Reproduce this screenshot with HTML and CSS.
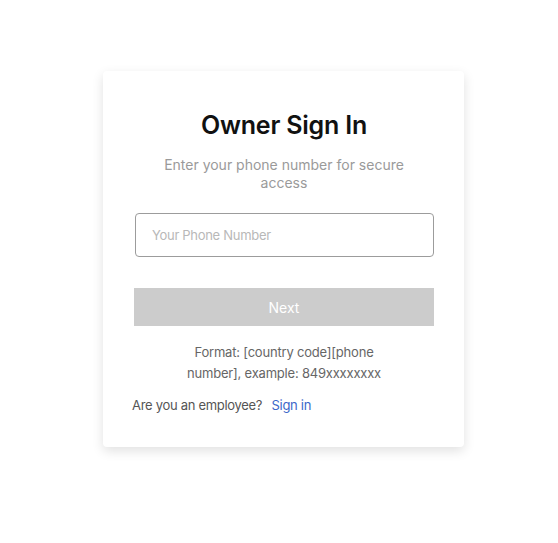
FILE: index.html
```html
<!DOCTYPE html>
<html>
<head>
<meta charset="utf-8">
<link rel="stylesheet" href="styles.css">
</head>
<body>
<div class="page">
  <div class="card">
    <h1 class="title">Owner Sign In</h1>
    <p class="subtitle">Enter your phone number for secure access</p>
    <input class="phone" type="text" placeholder="Your Phone Number">
    <button class="next">Next</button>
    <p class="format">Format: [country code][phone number], example: 849xxxxxxxx</p>
    <p class="employee">Are you an employee? <a class="link" href="#">Sign in</a></p>
  </div>
</div>
</body>
</html>
```
FILE: styles.css
```css
html, body {
  margin: 0;
  padding: 0;
  background: #ffffff;
  font-family: Inter, "Noto Sans", sans-serif;
}
.page {
  padding: 71px 0 60px 103px;
}
.card {
  box-sizing: border-box;
  width: 361px;
  height: 376px;
  padding: 38px 30px 0 31px;
  background: #fff;
  border-radius: 4px;
  box-shadow: 0 4px 12px rgba(0, 0, 0, 0.12);
  display: flex;
  flex-direction: column;
}
.title {
  margin: 0;
  text-align: center;
  font-size: 25px;
  font-weight: 600;
  color: #111;
  line-height: 32px;
  letter-spacing: -0.2px;
}
.subtitle {
  margin: 15px auto 0;
  width: 250px;
  text-align: center;
  font-size: 14px;
  line-height: 18px;
  color: #9a9a9a;
}
.phone {
  box-sizing: border-box;
  margin: 21px 0 0 1px;
  width: 299px;
  height: 44px;
  border: 1px solid #9c9c9c;
  border-radius: 4px;
  padding: 0 16px;
  font-family: inherit;
  font-size: 13px;
  color: #333;
  outline: none;
}
.phone::placeholder {
  color: #b8b8b8;
  letter-spacing: -0.3px;
}
.next {
  margin-top: 31px;
  width: 300px;
  height: 38px;
  border: none;
  border-radius: 0;
  background: #cccccc;
  color: #fff;
  font-family: inherit;
  font-size: 14px;
  font-weight: 400;
}
.format {
  margin: 16px auto 0;
  width: 210px;
  text-align: center;
  font-size: 13px;
  line-height: 21px;
  color: #666;
  letter-spacing: -0.2px;
}
.employee {
  margin: 12px 0 0 -2px;
  font-size: 13px;
  line-height: 18px;
  color: #555;
  letter-spacing: -0.3px;
}
.link {
  margin-left: 6px;
  color: #3c68c9;
  text-decoration: none;
}
```
